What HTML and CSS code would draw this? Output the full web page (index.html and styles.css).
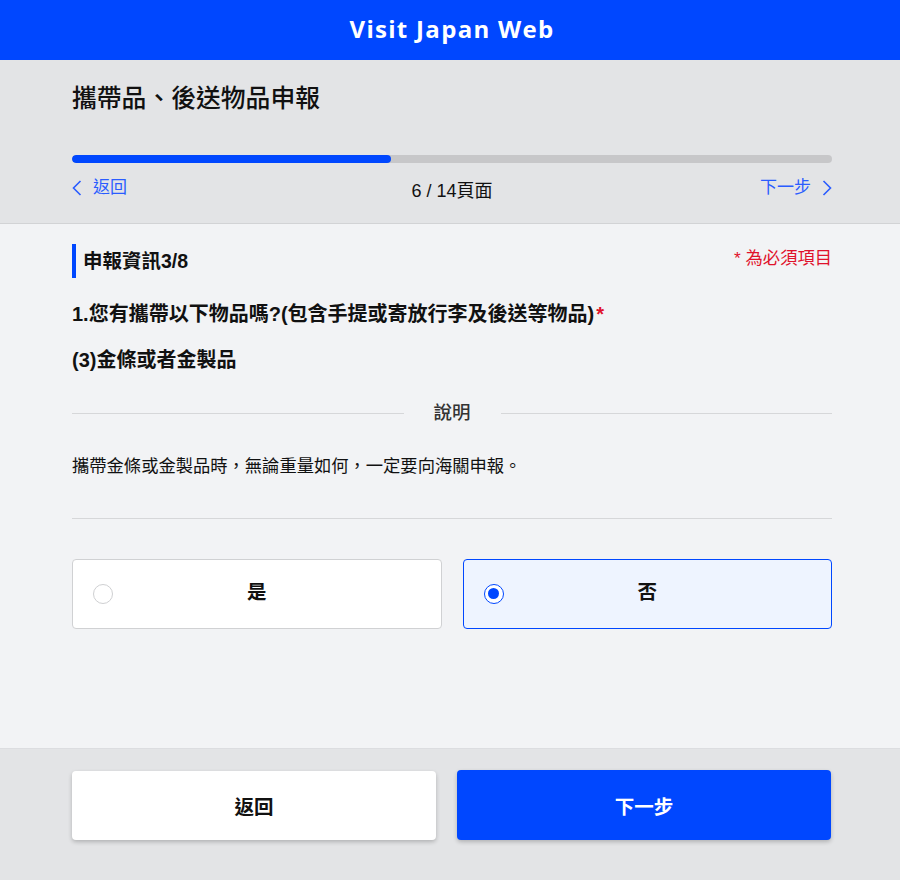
FILE: index.html
```html
<!DOCTYPE html>
<html lang="zh-Hant">
<head>
<meta charset="utf-8">
<title>Visit Japan Web</title>
<link rel="stylesheet" href="styles.css">
</head>
<body>
<header class="topbar">
  <h1 class="brand">Visit Japan Web</h1>
</header>

<section class="pagehead">
  <div class="wrap">
    <h2 class="page-title">攜帶品、後送物品申報</h2>
    <div class="progress"><div class="progress-fill" style="width: 42%"></div></div>
    <div class="stepnav">
      <a class="navlink back" href="#">
        <svg class="chev" viewBox="0 0 10 16" width="10" height="16"><path d="M8.5 1 L1.5 8 L8.5 15" fill="none" stroke="currentColor" stroke-width="1.6"/></svg>
        <span>返回</span>
      </a>
      <span class="pagecount">6 / 14頁面</span>
      <a class="navlink next" href="#">
        <span>下一步</span>
        <svg class="chev" viewBox="0 0 10 16" width="10" height="16"><path d="M1.5 1 L8.5 8 L1.5 15" fill="none" stroke="currentColor" stroke-width="1.6"/></svg>
      </a>
    </div>
  </div>
</section>

<main class="content">
  <div class="wrap">
    <div class="sechead">
      <h3 class="sectitle">申報資訊3/8</h3>
      <span class="required-note">* 為必須項目</span>
    </div>
    <p class="question">1.您有攜帶以下物品嗎?(包含手提或寄放行李及後送等物品)<span class="req">*</span></p>
    <p class="subq">(3)金條或者金製品</p>
    <div class="divider"><span>說明</span></div>
    <p class="desc">攜帶金條或金製品時，無論重量如何，一定要向海關申報。</p>
    <hr class="rule">
    <div class="options">
      <label class="option">
        <span class="radio"></span>
        <span class="opt-text">是</span>
      </label>
      <label class="option selected">
        <span class="radio"></span>
        <span class="opt-text">否</span>
      </label>
    </div>
  </div>
</main>

<footer class="footer">
  <div class="wrap btns">
    <button class="btn btn-back">返回</button>
    <button class="btn btn-next">下一步</button>
  </div>
</footer>
</body>
</html>
```

FILE: styles.css
```css
* { box-sizing: border-box; }
html, body { margin: 0; padding: 0; }
body {
  width: 900px;
  height: 880px;
  overflow: hidden;
  font-family: "Liberation Sans", "Noto Sans CJK TC", sans-serif;
  color: #111;
  background: #e3e4e6;
}
.wrap {
  padding: 0 68px 0 72px;
}

.topbar {
  height: 60px;
  background: #0047ff;
  display: flex;
  align-items: center;
  justify-content: center;
}
.brand {
  margin: 0;
  color: #fff;
  font-family: "Open Sans", "Liberation Sans", sans-serif;
  font-weight: 700;
  font-size: 24px;
  letter-spacing: 1.3px;
  line-height: 1;
  padding-bottom: 2px;
  padding-left: 4px;
}

.pagehead {
  background: #e3e4e6;
  height: 164px;
  border-bottom: 1px solid #d2d3d5;
  padding-top: 24px;
}
.page-title {
  margin: 0;
  font-size: 24.8px;
  font-weight: 500;
  line-height: 30px;
  color: #111;
}
.progress {
  margin-top: 41px;
  height: 8px;
  border-radius: 4px;
  background: #c7c7c9;
  overflow: hidden;
}
.progress-fill {
  height: 100%;
  background: #0047ff;
  border-radius: 4px;
}
.stepnav {
  margin-top: 13px;
  display: grid;
  grid-template-columns: 1fr auto 1fr;
  align-items: start;
  height: 30px;
}
.navlink {
  display: flex;
  align-items: center;
  gap: 11px;
  color: #2a5cff;
  text-decoration: none;
  font-size: 17px;
  line-height: 24px;
}
.navlink.next { justify-self: end; }
.chev { display: block; }
.pagecount {
  font-size: 18px;
  line-height: 24px;
  margin-top: 3px;
  color: #111;
}

.content {
  background: #f2f3f5;
  height: 525px;
  border-bottom: 1px solid #dcdde0;
  padding-top: 20px;
}
.sechead {
  display: flex;
  justify-content: space-between;
  align-items: flex-start;
}
.sectitle {
  margin: 0;
  height: 34px;
  border-left: 4px solid #0047ff;
  padding-left: 7px;
  font-size: 19.5px;
  font-weight: 700;
  line-height: 34px;
}
.required-note {
  color: #e0112b;
  font-size: 17.3px;
  line-height: 28px;
}
.question {
  margin: 23px 0 0;
  font-size: 20px;
  font-weight: 700;
  line-height: 26px;
}
.req { color: #e0112b; margin-left: 2px; }
.subq {
  margin: 20px 0 0;
  font-size: 20px;
  font-weight: 700;
  line-height: 26px;
}
.divider {
  margin-top: 28px;
  display: flex;
  align-items: center;
  gap: 30px;
  font-size: 18.5px;
  line-height: 24px;
  color: #333;
  font-weight: 500;
}
.divider::before,
.divider::after {
  content: "";
  flex: 1;
  height: 1px;
  background: #d6d7d9;
}
.desc {
  margin: 29px 0 0;
  font-size: 17.3px;
  line-height: 24px;
  color: #111;
}
.rule {
  margin: 40px 0 0;
  border: 0;
  height: 1px;
  background: #d6d7d9;
}
.options {
  margin-top: 40px;
  display: grid;
  grid-template-columns: 1fr 1fr;
  gap: 21px;
}
.option {
  position: relative;
  height: 70px;
  background: #fff;
  border: 1px solid #d0d1d3;
  border-radius: 4px;
  display: flex;
  align-items: center;
  justify-content: center;
}
.option.selected {
  background: #eef4ff;
  border-color: #0047ff;
}
.radio {
  position: absolute;
  left: 20px;
  top: 50%;
  margin-top: -10px;
  width: 20px;
  height: 20px;
  border-radius: 50%;
  border: 1px solid #cfd0d2;
  background: #fff;
}
.option.selected .radio {
  border: 1.5px solid #0047ff;
  background: #fff;
}
.option.selected .radio::after {
  content: "";
  position: absolute;
  left: 3px;
  top: 3px;
  width: 11px;
  height: 11px;
  border-radius: 50%;
  background: #0047ff;
}
.opt-text {
  font-size: 19.5px;
  font-weight: 700;
  line-height: 26px;
  margin-top: -4px;
}

.footer {
  background: #e3e4e6;
  padding-top: 21px;
}
.btns {
  display: grid;
  grid-template-columns: 364px 374px;
  gap: 21px;
}
.btn {
  height: 70px;
  border: 0;
  border-radius: 4px;
  font-family: "Liberation Sans", "Noto Sans CJK TC", sans-serif;
  font-size: 19.5px;
  font-weight: 700;
  cursor: pointer;
  box-shadow: 0 2px 4px rgba(0,0,0,0.22);
}
.btn-back {
  background: #fff;
  color: #111;
  height: 69px;
  margin-top: 1px;
}
.btn-next {
  background: #0047ff;
  color: #fff;
}
```
